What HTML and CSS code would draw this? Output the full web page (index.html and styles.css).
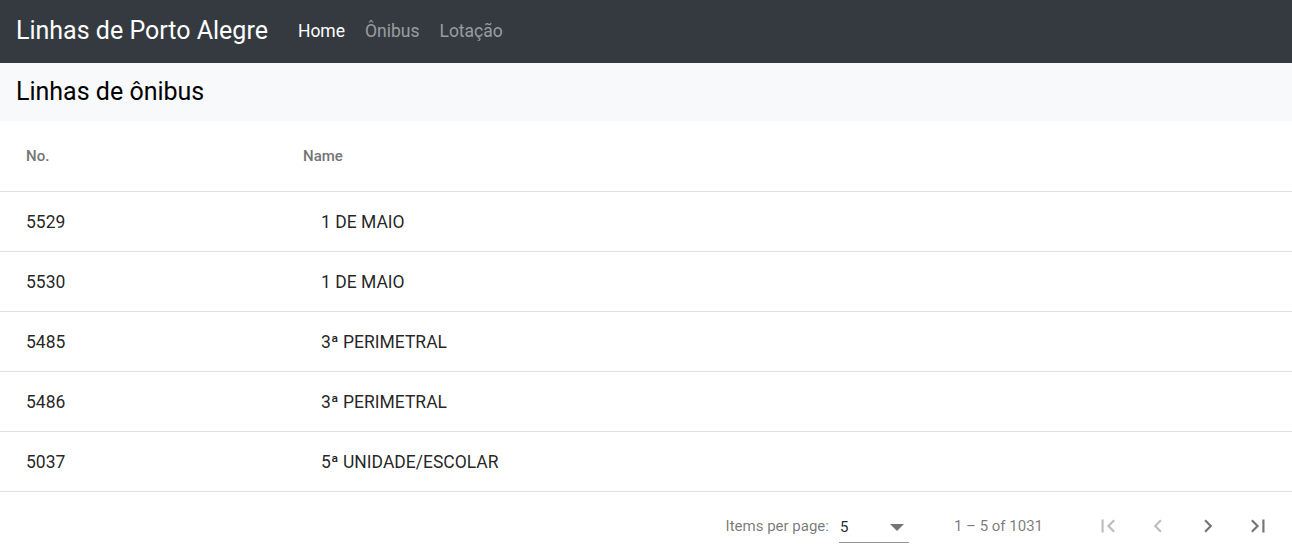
FILE: index.html
```html
<!DOCTYPE html>
<html lang="pt">
<head>
<meta charset="utf-8">
<title>Linhas de Porto Alegre</title>
<link rel="stylesheet" href="styles.css">
</head>
<body>
<nav class="navbar">
  <a class="brand" href="#">Linhas de Porto Alegre</a>
  <ul class="nav">
    <li><a class="nav-link active" href="#">Home</a></li>
    <li><a class="nav-link" href="#">Ônibus</a></li>
    <li><a class="nav-link" href="#">Lotação</a></li>
  </ul>
</nav>
<header class="subheader">
  <h1>Linhas de ônibus</h1>
</header>
<main class="table-wrap">
  <table class="lines">
    <thead>
      <tr><th class="col-no">No.</th><th class="col-name">Name</th></tr>
    </thead>
    <tbody>
      <tr><td class="col-no">5529</td><td class="col-name"><span class="name">1 DE MAIO</span></td></tr>
      <tr><td class="col-no">5530</td><td class="col-name"><span class="name">1 DE MAIO</span></td></tr>
      <tr><td class="col-no">5485</td><td class="col-name"><span class="name">3ª PERIMETRAL</span></td></tr>
      <tr><td class="col-no">5486</td><td class="col-name"><span class="name">3ª PERIMETRAL</span></td></tr>
      <tr><td class="col-no">5037</td><td class="col-name"><span class="name">5ª UNIDADE/ESCOLAR</span></td></tr>
    </tbody>
  </table>
  <div class="paginator">
    <div class="page-size">
      <span class="label">Items per page:</span>
      <div class="select">
        <span class="value">5</span>
        <span class="arrow"></span>
      </div>
    </div>
    <div class="range">1 – 5 of 1031</div>
    <div class="actions">
      <button class="pbtn disabled" aria-label="First page">
        <svg viewBox="0 0 24 24" width="26" height="26"><path d="M18.41 16.59L13.82 12l4.59-4.59L17 6l-6 6 6 6zM6 6h2v12H6z"/></svg>
      </button>
      <button class="pbtn disabled" aria-label="Previous page">
        <svg viewBox="0 0 24 24" width="26" height="26"><path d="M15.41 7.41L14 6l-6 6 6 6 1.41-1.41L10.83 12z"/></svg>
      </button>
      <button class="pbtn" aria-label="Next page">
        <svg viewBox="0 0 24 24" width="26" height="26"><path d="M10 6L8.59 7.41 13.17 12l-4.58 4.59L10 18l6-6z"/></svg>
      </button>
      <button class="pbtn" aria-label="Last page">
        <svg viewBox="0 0 24 24" width="26" height="26"><path d="M5.59 7.41L10.18 12l-4.59 4.59L7 18l6-6-6-6zM16 6h2v12h-2z"/></svg>
      </button>
    </div>
  </div>
</main>
</body>
</html>
```
FILE: styles.css
```css
* { box-sizing: border-box; }
html, body { margin: 0; padding: 0; }
body {
  font-family: Roboto, "Helvetica Neue", Arial, sans-serif;
  color: #212529;
  background: #fff;
}
.navbar {
  height: 63px;
  background: #343a40;
  display: flex;
  align-items: center;
  padding: 0 16px 2px;
}
.brand {
  color: #fff;
  font-size: 25px;
  text-decoration: none;
  margin-right: 22px;
  line-height: 1.5;
}
.nav {
  list-style: none;
  margin: 0;
  padding: 0;
  display: flex;
  gap: 4px;
}
.nav-link {
  display: block;
  padding: 8px;
  font-size: 17.5px;
  color: rgba(255,255,255,.5);
  text-decoration: none;
}
.nav-link.active { color: #fff; }
.subheader {
  height: 58px;
  background: #f8f9fa;
  display: flex;
  align-items: center;
  padding: 0 16px 2px;
}
.subheader h1 {
  margin: 0;
  font-size: 25px;
  font-weight: 400;
  color: #000;
}
.table-wrap { background: #fff; }
.lines {
  width: 100%;
  border-collapse: collapse;
}
.lines th, .lines td {
  text-align: left;
  border-bottom: 1px solid #e0e0e0;
  padding: 0;
}
.lines th {
  height: 70px;
  font-size: 15px;
  font-weight: 500;
  color: #757575;
}
.lines td {
  height: 60px;
  padding-top: 2px;
  font-size: 17.5px;
  color: rgba(0,0,0,.87);
}
.col-no { width: 303px; padding-left: 26px !important; }
.name { padding-left: 18px; }
.paginator {
  height: 68px;
  display: flex;
  align-items: center;
  justify-content: flex-end;
  padding: 0 10px 0 8px;
  font-size: 15px;
  color: rgba(0,0,0,.54);
}
.page-size {
  display: flex;
  align-items: center;
  gap: 10px;
}
.select {
  width: 70px;
  height: 34px;
  display: flex;
  align-items: center;
  justify-content: space-between;
  border-bottom: 1px solid rgba(0,0,0,.42);
  padding: 4px 4px 0 1px;
  color: rgba(0,0,0,.87);
}
.arrow {
  width: 0; height: 0;
  border-left: 7px solid transparent;
  border-right: 7px solid transparent;
  border-top: 7px solid rgba(0,0,0,.54);
  margin-right: 1px;
}
.range {
  margin: 0 41px 0 45px;
}
.actions {
  display: flex;
  gap: 2px;
}
.pbtn {
  width: 48px;
  height: 48px;
  border: 0;
  background: transparent;
  padding: 0;
  display: flex;
  align-items: center;
  justify-content: center;
  fill: rgba(0,0,0,.54);
}
.pbtn.disabled { fill: rgba(0,0,0,.26); }
```
